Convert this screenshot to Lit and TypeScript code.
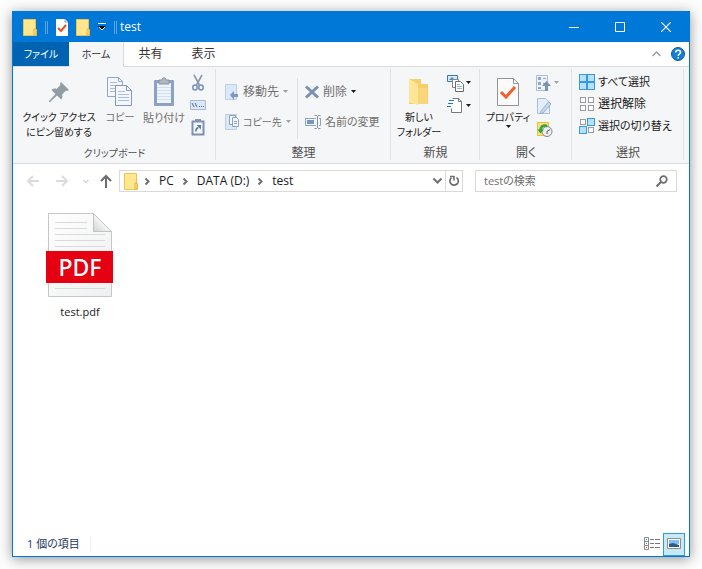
import { LitElement, html, svg, css, nothing, type TemplateResult } from "lit";
import { customElement, property } from "lit/decorators.js";

const icon = (w: number, h: number, body: TemplateResult) =>
  html`<svg width=${w} height=${h} viewBox="0 0 ${w} ${h}" fill="none" aria-hidden="true">${body}</svg>`;

const caret = (color = "#1a1a1a") => icon(7, 4, svg`<path d="M1 0h5L3.500 3z" fill=${color}/>`);

const folder = () => icon(14, 17, svg`
  <path d="M.5.5h12v9.500l1 .500v6H.5z" fill="#ffe68f" stroke="#ecc44f"/>
  <path d="M11 16V10h2v6z" fill="#ffe9a0" stroke="#e5b43c"/>`);

const check = () => icon(12, 17, svg`
  <path d="M0 0h9l3 3v14H0z" fill="#fff"/><path d="M9 0v3h3" stroke="#8c9db0"/>
  <path d="M2 9l3 3 5-6" stroke="#e8531f" stroke-width="2"/>`);

const pin = () => icon(22, 22, svg`
  <path d="M13 1l8 8-2 1-1-.500-4 4c.800 2 .500 3.500-.800 5L9 14.500 2 21H1v-1l6.500-7L3.500 9C5 7.500 6.500 7.200 8.500 8l4-4-.500-1z" fill="#929ca3"/>`);

const copy = () => icon(26, 30, svg`
  <path d="M.5.5h11l4 4v15H.5z" fill="#f4f8fe" stroke="#91a8cc"/><path d="M11.500.5v4h4" stroke="#91a8cc"/>
  <path d="M3 5.500h7M3 8.500h10M3 11.500h10M3 14.500h10" stroke="#a9bddd"/>
  <path d="M8.500 8.500h11l5 5v15h-16z" fill="#f4f8fe" stroke="#8299be"/><path d="M19.500 8.500v5h5" stroke="#8299be"/>
  <path d="M11 14.500h7M11 17.500h11M11 20.500h11M11 23.500h11" stroke="#a9bddd"/>`);

const paste = () => icon(22, 30, svg`
  <rect x="1" y="3" width="20" height="26" rx="1" fill="#8ba2c6"/>
  <path d="M4 6h14v20H4z" fill="#eff5fd"/>
  <path d="M4 10.500h14M4 13.500h14M4 16.500h14M4 19.500h14M4 22.500h14" stroke="#d2dfef"/>
  <path d="M6 3h3c0-3 4-3 4 0h3v4H6z" fill="#b0b8c4" stroke="#8792a2"/>`);

const scissors = () => icon(16, 18, svg`
  <path d="M4 1l5.500 10M12 1L6.500 11" stroke="#8a99ae" stroke-width="1.600"/>
  <ellipse cx="5" cy="13.500" rx="2.200" ry="2.500" stroke="#7790b9" stroke-width="1.500"/>
  <ellipse cx="11" cy="13.500" rx="2.200" ry="2.500" stroke="#7790b9" stroke-width="1.500"/>`);

const pathIcon = () => icon(16, 10, svg`
  <path d="M.5.5h15v9H.5z" fill="#dce8f8" stroke="#a6b9d6"/>
  <path d="M2 3l2 4M5 3l2 4M9 6.500h1M11 6.500h1M13 6.500h1" stroke="#536b91"/>`);

const shortcut = () => icon(14, 17, svg`
  <path d="M1.500 2.500h11v13h-11z" fill="#f4f8fd" stroke="#7c92b5" stroke-width="2"/>
  <path d="M4 0h6v3H4z" fill="#8795aa"/>
  <path d="M5 12.500c-.500-2.500 1-3.500 2.500-4" stroke="#5e7ba8" stroke-width="1.500"/><path d="M5.500 6H10v4.500z" fill="#5e7ba8"/>`);

const moveTo = () => icon(16, 18, svg`
  <path d="M1.500 1.500h11v15h-11z" fill="#dce8f8" stroke="#bccde6"/>
  <path d="M6 12l4-4v3h4v3h-4v3z" fill="#7d97c0"/>`);

const copyTo = () => icon(16, 18, svg`
  <path d="M1.500 1.500h11v15h-11z" fill="#dce8f8" stroke="#bccde6"/>
  <path d="M5.500 2.500h6v9h-6z" fill="#f5f9ff" stroke="#8aa2c8"/>
  <path d="M8.500 4.500h4l2 2v7h-6z" fill="#f5f9ff" stroke="#8aa2c8"/><path d="M10 8.500h3M10 10.500h3" stroke="#8aa2c8"/>`);

const cross = () => icon(16, 16, svg`<path d="M2 2.500l12 11M14 2.500L2 13.500" stroke="#7b90b1" stroke-width="3"/>`);

const rename = () => icon(18, 16, svg`
  <path d="M12 4.500H1.500v7H12M15 4.500h1.500v7H15" stroke="#8ba2c6"/>
  <path d="M3 6h7v4H3z" fill="#7b95bf"/><path d="M10.500 1.500h2l1 1 1-1h2M13.500 2v12M10.500 14.500h2l1-1 1 1h2" stroke="#7b90b1"/>`);

const newFolder = () => icon(22, 28, svg`
  <path d="M1 1h12v5h7v20H1z" fill="#f6cf6c"/>
  <path d="M1 1l9 5v21l-9-3z" fill="#ffe596"/><path d="M10 10h9v16h-9z" fill="#f9d67a"/>`);

const newItem = () => icon(17, 18, svg`
  <path d="M.5 1.500h10v6H.5z" fill="#d7ebfa" stroke="#3b78ad"/><path d="M2 6l3-3 3 3z" fill="#4c8dc0"/>
  <path d="M5.500 5.500h6v8h-6z" fill="#fff" stroke="#888"/>
  <path d="M8.500 7.500h5l3 3v7h-8z" fill="#fff" stroke="#6c6c6c"/><path d="M10 10.500h3M10 12.500h5M10 14.500h5" stroke="#8bb7dd"/>`);

const easyAccess = () => icon(17, 18, svg`
  <path d="M4.500 1.500h7l4 4v10h-11z" fill="#fff"/><path d="M5.500 1.500h6l3 3v11h-10v-4M11.500 1.500v3h3" stroke="#777"/>
  <path d="M2 3.500h5M1 6.500h5M0 9.500h4" stroke="#2378b5"/>`);

const properties = () => icon(24, 30, svg`
  <path d="M1.500 1.500h16l5 5v22h-21z" fill="#fbfbfb" stroke="#949494"/><path d="M17.500 1.500v5h5" stroke="#949494"/>
  <path d="M5 15l5 5 9-10" stroke="#f06029" stroke-width="3"/>`);

const openIcon = () => icon(16, 17, svg`
  <path d="M.5.5h11v15H.5z" fill="#eef3fa" stroke="#adbdd3"/>
  <path d="M2 2h3v3H2zM2 7h3v3H2zM2 12h3v2H2z" fill="#91a8cb"/><path d="M7 3.500h3M7 8.500h2" stroke="#91a8cb"/>
  <path d="M6 11l4.500-5 4.500 5h-3v5H9v-5z" fill="#7d91b2"/>`);

const edit = () => icon(16, 17, svg`
  <path d="M1.500.5h8l4 4v11h-12z" fill="#e4eefb" stroke="#aabdd9"/>
  <path d="M5 13l7.500-9L15 6l-8 9-3 .500z" fill="#c6d7ef" stroke="#9cb2d3"/>`);

const history = () => icon(17, 17, svg`
  <path d="M1.500 1.500h11v13h-11z" fill="#ffe177" stroke="#e5bd48"/>
  <circle cx="11" cy="10.500" r="5" fill="#eee" stroke="#858585"/><path d="M11 10.500l3-2M11 10.500v2.500" stroke="#555"/>
  <path d="M11 5C7 3.500 4.500 6 4.500 9" stroke="#2fa345" stroke-width="2.500"/><path d="M1.500 8.500h6.500l-3.500 4z" fill="#2fa345"/>`);

const cell = (x: number, y: number, on: boolean) => svg`
  <rect x=${x + 0.5} y=${y + 0.5} width=${on ? 7 : 5} height=${on ? 7 : 5}
    fill=${on ? "#b8e0fa" : "#fff"} stroke=${on ? "#3599e3" : "#9c9c9c"}/>`;
const selectAll = () => icon(16, 16, svg`${cell(0, 0, true)}${cell(8, 0, true)}${cell(0, 8, true)}${cell(8, 8, true)}`);
const selectNone = () => icon(16, 16, svg`${cell(1, 1, false)}${cell(9, 1, false)}${cell(1, 9, false)}${cell(9, 9, false)}`);
const invert = () => icon(16, 16, svg`${cell(1, 1, false)}${cell(8, 0, true)}${cell(0, 8, true)}${cell(9, 9, false)}`);

const arrow = (d: string, color: string) => icon(14, 14, svg`<path d=${d} stroke=${color} stroke-width="2"/>`);
const crumbChevron = () => icon(5, 7, svg`<path d="M.5.5l3 3-3 3" stroke="#707070" stroke-width="2"/>`);

@customElement("ribbon-group")
export class RibbonGroup extends LitElement {
  @property() label = "";

  static styles = css`
    :host { display: flex; flex-direction: column; flex: none; box-sizing: border-box; position: relative; padding: 7px 0 2px; }
    :host::after { content: ""; position: absolute; right: 0; top: 2px; bottom: 3px; border-right: 1px solid #e0e1e2; }
    .body { flex: 1; display: flex; align-items: flex-start; }
    .label { text-align: center; line-height: 16px; color: #505050; }
  `;

  render() {
    return html`<div class="body"><slot></slot></div><div class="label">${this.label}</div>`;
  }
}

@customElement("app-root")
export class AppRoot extends LitElement {
  static styles = css`
    :host {
      display: flex; box-sizing: border-box; height: 100vh; padding: 11px 12px 12px; background: #fdfdfd;
      font: 12px/16px "Open Sans", "Noto Sans CJK JP", sans-serif;
      font-feature-settings: "palt"; color: #1a1a1a;
    }
    * { box-sizing: border-box; }
    svg { display: block; flex: none; }
    button, input { font: inherit; font-feature-settings: inherit; color: inherit; border: 0; padding: 0; margin: 0; background: none; }
    button { display: flex; align-items: center; white-space: nowrap; }
    .window {
      flex: 1; min-width: 0; display: flex; flex-direction: column; background: #fff;
      border: 1px solid #0078d7; box-shadow: 0 2px 12px rgba(0, 0, 0, 0.42);
    }
    .title { flex: none; display: flex; align-items: center; height: 30px; padding-left: 10px; background: #0078d7; color: #fff; }
    .title h1 { margin: 0 auto 0 3px; font-size: 12px; font-weight: 400; }
    .bar { width: 3px; height: 13px; border: solid #5fa6e0; border-width: 0 1px; }
    .quick { display: flex; align-items: center; gap: 8px; margin-left: 8px; }
    .caption { width: 46px; height: 30px; justify-content: center; }
    .tabs { flex: none; display: flex; height: 25px; border-bottom: 1px solid #dadbdc; }
    .tab { justify-content: center; width: 53px; height: 24px; color: #333; }
    .tab.file { width: 56px; background: #0063b1; color: #fff; }
    .tab.home { width: 55px; height: 25px; background: #f5f6f7; border-right: 1px solid #dadbdc; padding-bottom: 1px; }
    .tools { margin-left: auto; display: flex; align-items: center; gap: 10px; padding-right: 4px; }
    .ribbon { flex: none; display: flex; height: 97px; background: #f5f6f7; border-bottom: 1px solid #dadbdc; overflow: hidden; }
    .kanji { font-size: 11px; }
    .kana { font-size: 10px; }
    .clip { width: 203px; }
    .organize { width: 175px; }
    .new { width: 89px; }
    .open { width: 92px; }
    .select { width: 112px; padding-top: 4px; }
    .big { flex: none; flex-direction: column; line-height: 15px; color: #1a1a1a; }
    .big .pic { height: 36px; display: flex; align-items: center; }
    .big.pin { width: 92px; }
    .big.copy { width: 30px; }
    .big.paste { width: 42px; margin: 0 5px 0 8px; }
    .big.narrow { width: 56px; }
    .big.off { color: #707070; }
    .small { display: flex; flex-direction: column; gap: 5px; font-size: 12px; }
    .small button { height: 18px; gap: 1px; }
    .clip .small { gap: 4px; }
    .clip .small button { justify-content: center; }
    .pair { display: flex; flex-direction: column; gap: 12px; width: 81px; padding: 9px 0 0 8px; font-size: 12px; }
    .pair button { height: 18px; gap: 3px; color: #707070; }
    .pair + .pair { width: auto; border-left: 1px solid #dfe0e1; margin-top: 4px; padding: 5px 0 8px 6px; }
    .list { display: flex; flex-direction: column; padding-left: 7px; }
    .list button { height: 22px; gap: 3px; }
    .nav { flex: none; display: flex; align-items: center; height: 34px; padding: 0 12px 0 13px; }
    .arrows { display: flex; align-items: center; gap: 15px; margin-right: 6px; }
    .arrows button:nth-child(3) { margin: 0 -5px 0 -1px; }
    .address { flex: 1; min-width: 0; display: flex; align-items: center; height: 22px; border: 1px solid #d9d9d9; padding-left: 4px; }
    .crumbs { display: flex; align-items: center; gap: 9px; margin: 0 auto 0 7px; }
    .crumbs a { color: inherit; text-decoration: none; }
    .drop { padding: 0 3px; }
    .refresh { height: 20px; width: 17px; justify-content: center; border-left: 1px solid #d9d9d9; }
    .search { flex: none; display: flex; align-items: center; width: 202px; height: 22px; margin-left: 12px; border: 1px solid #d9d9d9; padding: 0 8px; }
    .search input { flex: 1; min-width: 0; outline: 0; font-size: 11px; }
    .search input::placeholder { color: #6d6d6d; opacity: 1; }
    .files { flex: 1; padding: 14px 28px; }
    .item { flex-direction: column; width: 78px; }
    .art { position: relative; }
    .pdf {
      position: absolute; left: 0; right: 0; top: 39px; height: 32px;
      color: #fff; font: 500 23px/32px "Noto Sans", sans-serif; text-align: center;
    }
    .name { margin-top: 6px; font-size: 11px; }
    .status { flex: none; display: flex; align-items: center; height: 24px; padding: 0 4px 0 14px; color: #1e395b; }
    .status output { margin-right: auto; padding-right: 10px; border-right: 1px solid #f0f0f0; font-size: 11px; }
    .view { width: 22px; height: 23px; justify-content: center; }
    .view.on { background: #cbe8f7; border: 1px solid #26a0da; }
  `;

  private big(pic: TemplateResult, lines: string[], kind: string, after: unknown = nothing) {
    return html`<button class="big ${kind}"><span class="pic">${pic}</span>
      ${lines.map((l) => html`<span>${l}</span>`)}${after}</button>`;
  }

  private small(name: string, pic: TemplateResult, after: unknown = nothing) {
    return html`<button aria-label=${name}>${pic}${after}</button>`;
  }

  render() {
    return html`<main class="window">
      <header class="title">
        ${folder()}<span class="quick"><span class="bar"></span>
        <button aria-label="プロパティ">${check()}</button>
        <button aria-label="新しいフォルダー">${folder()}</button>
        <button aria-label="カスタマイズ">${icon(8, 8, svg`<path d="M0 .5h8" stroke="#fff"/><path d="M0 3h8L4 7z" fill="#000"/><path d="M1 4l3 3 3-3" stroke="#d6e9f8"/>`)}</button>
        <span class="bar"></span></span>
        <h1>test</h1>
        <button class="caption" aria-label="最小化">${icon(10, 10, svg`<path d="M0 5.500h10" stroke="#fff"/>`)}</button>
        <button class="caption" aria-label="最大化">${icon(10, 10, svg`<path d="M.5.5h9v9h-9z" stroke="#fff"/>`)}</button>
        <button class="caption" aria-label="閉じる">${icon(10, 10, svg`<path d="M0 0l10 10M10 0L0 10" stroke="#fff" stroke-width="1.200"/>`)}</button>
      </header>
      <nav class="tabs">
        <button class="tab file kana">ファイル</button><button class="tab home kana">ホーム</button>
        <button class="tab">共有</button><button class="tab">表示</button>
        <span class="tools">
          <button aria-label="リボンの最小化">${icon(9, 6, svg`<path d="M.5 5l4-4 4 4" stroke="#999" stroke-width="1.400"/>`)}</button>
          <button aria-label="ヘルプ">${icon(14, 14, svg`<circle cx="7" cy="7" r="6.500" fill="#1280d8" stroke="#12599b"/><path d="M4.700 5.500c0-3.200 4.800-3 4.800-.300C9.500 7 7.200 6.800 7.200 9M7.200 10v1.500" stroke="#fff" stroke-width="1.500"/>`)}</button>
        </span>
      </nav>
      <section class="ribbon">
        <ribbon-group class="clip kana" label="クリップボード">
          ${this.big(pin(), ["クイック アクセス", "にピン留めする"], "pin")}
          ${this.big(copy(), ["コピー"], "copy off")}
          ${this.big(paste(), ["貼り付け"], "paste off kanji")}
          <div class="small">
            ${this.small("切り取り", scissors())}${this.small("パスのコピー", pathIcon())}${this.small("ショートカットの貼り付け", shortcut())}
          </div>
        </ribbon-group>
        <ribbon-group class="organize" label="整理">
          <div class="pair">
            <button>${moveTo()}移動先 ${caret("#a0a0a0")}</button>
            <button>${copyTo()}<span class="kana">コピー先</span>${caret("#a0a0a0")}</button>
          </div>
          <div class="pair">
            <button>${cross()}削除 ${caret()}</button>
            <button>${rename()}<span class="kanji">名前の変更</span></button>
          </div>
        </ribbon-group>
        <ribbon-group class="new" label="新規">
          ${this.big(newFolder(), ["新しい", "フォルダー"], "narrow kana")}
          <div class="small">${this.small("新しいアイテム", newItem(), caret())}${this.small("ショートカット", easyAccess(), caret())}</div>
        </ribbon-group>
        <ribbon-group class="open" label="開く">
          ${this.big(properties(), ["プロパティ"], "narrow kana", caret())}
          <div class="small">${this.small("開く", openIcon(), caret("#a0a0a0"))}${this.small("編集", edit())}${this.small("履歴", history())}</div>
        </ribbon-group>
        <ribbon-group class="select" label="選択">
          <div class="list">
            <button>${selectAll()}<span class="kanji">すべて選択</span></button>
            <button>${selectNone()}選択解除</button>
            <button>${invert()}<span class="kanji">選択の切り替え</span></button>
          </div>
        </ribbon-group>
      </section>
      <div class="nav">
        <div class="arrows">
          <button aria-label="戻る">${arrow("M13 7H2M7 2L2 7l5 5", "#dcdcdc")}</button>
          <button aria-label="進む">${arrow("M1 7h11M7 2l5 5-5 5", "#dcdcdc")}</button>
          <button aria-label="最近表示した場所">${icon(6, 5, svg`<path d="M.5 1l2.500 2.500L5.500 1" stroke="#d4d4d4" stroke-width="1.500"/>`)}</button>
          <button aria-label="上へ">${arrow("M7 14V2M2 7l5-5 5 5", "#6e6e6e")}</button>
        </div>
        <div class="address">
          ${folder()}
          <div class="crumbs">${crumbChevron()}<a href="#pc">PC</a>${crumbChevron()}<a href="#data">DATA (D:)</a>${crumbChevron()}<a href="#test">test</a></div>
          <button class="drop" aria-label="以前の場所">${icon(9, 6, svg`<path d="M.5.5l4 4 4-4" stroke="#707070" stroke-width="2"/>`)}</button>
          <button class="refresh" aria-label="最新の情報に更新">${icon(12, 12, svg`<path d="M8.500 2.500A4.200 4.200 0 1 1 3.500 2.700" stroke="#6e6e6e" stroke-width="1.700"/><path d="M2 1.500h4v4" stroke="#6e6e6e" stroke-width="1.600"/>`)}</button>
        </div>
        <label class="search">
          <input type="text" placeholder="testの検索" aria-label="testの検索" />
          ${icon(12, 12, svg`<circle cx="7.500" cy="4.500" r="3.300" stroke="#6e6e6e" stroke-width="1.700"/><path d="M5 7l-4.500 4.500" stroke="#6e6e6e" stroke-width="2"/>`)}
        </label>
      </div>
      <section class="files">
        <button class="item">
          <span class="art">${icon(68, 86, svg`
            <defs>
              <linearGradient id="page" x2="1" y2="1"><stop stop-color="#fff"/><stop offset="1" stop-color="#eeeff0"/></linearGradient>
              <linearGradient id="fold" x1="1" y1="0" x2="0" y2="1"><stop offset=".5" stop-color="#f6f6f6"/><stop offset="1" stop-color="#cfd0d1"/></linearGradient>
            </defs>
            <path d="M2.500 1.500h45l18 18v65h-63z" fill="url(#page)" stroke="#c4c6c8"/>
            <path d="M47.500 1.500v18h18z" fill="url(#fold)" stroke="#bfc1c3"/>
            <path d="M9 10.500h32M9 16.500h32M9 22.500h50M9 28.500h50M9 34.500h50M9 76.500h50" stroke="#d9dadb"/>
            <path d="M0 39h67v32H0z" fill="#e50012"/>`)}<span class="pdf">PDF</span></span>
          <span class="name">test.pdf</span>
        </button>
      </section>
      <footer class="status">
        <output>1 個の項目</output>
        <button class="view" aria-label="詳細">${icon(17, 14, svg`<path d="M.5.5h4v12h-4zM.5 4.500h4M.5 8.500h4" stroke="#8b8b8b"/><path d="M2 2h1v1H2zM2 6h1v1H2z" fill="#3a87ba"/><path d="M2 10h1v1H2z" fill="#e22"/><path d="M6 2.500h4M11 2.500h5M6 6.500h4M11 6.500h5M6 10.500h4M11 10.500h5" stroke="#777"/>`)}</button>
        <button class="view on" aria-label="大アイコン">${icon(14, 12, svg`<path d="M.5.5h13v10H.5z" fill="#fff" stroke="#8d8d8d"/><path d="M2 2h10v4H2z" fill="#86bdf0"/><path d="M2 6l4-1 6 2v2H2z" fill="#2c5e88"/>`)}</button>
      </footer>
    </main>`;
  }
}
